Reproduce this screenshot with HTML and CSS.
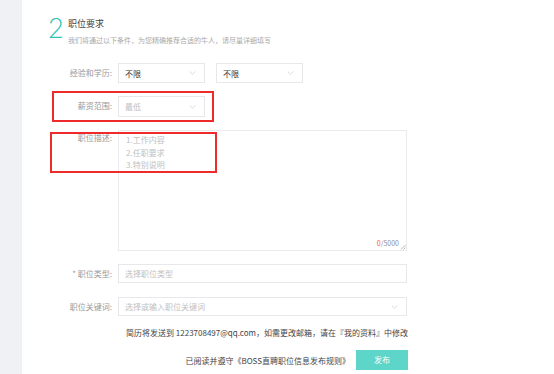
FILE: index.html
```html
<!DOCTYPE html>
<html lang="zh">
<head>
<meta charset="utf-8">
<link rel="stylesheet" href="styles.css">
</head>
<body>
<div class="sidebar"></div>
<div class="main">
  <div class="header">
    <div class="num">2</div>
    <div class="titles">
      <div class="title">职位要求</div>
      <div class="subtitle">我们将通过以下条件，为您精确推荐合适的牛人，请尽量详细填写</div>
    </div>
  </div>
  <div class="form">
    <div class="row">
      <div class="label">经验和学历:</div>
      <div class="select"><span>不限</span><svg class="chev" viewBox="0 0 8 5" width="7" height="4"><path d="M0.5 0.5 L4 4 L7.5 0.5" fill="none" stroke="#c4c4c4" stroke-width="0.8"/></svg></div>
      <div class="select second"><span>不限</span><svg class="chev" viewBox="0 0 8 5" width="7" height="4"><path d="M0.5 0.5 L4 4 L7.5 0.5" fill="none" stroke="#c4c4c4" stroke-width="0.8"/></svg></div>
    </div>
    <div class="row salary">
      <div class="label">薪资范围:</div>
      <div class="select"><span class="ph">最低</span><svg class="chev" viewBox="0 0 8 5" width="7" height="4"><path d="M0.5 0.5 L4 4 L7.5 0.5" fill="none" stroke="#c4c4c4" stroke-width="0.8"/></svg></div>
      <div class="mark mark1"></div>
    </div>
    <div class="row desc">
      <div class="label">职位描述:</div>
      <div class="textarea">
        <div class="ph lines">
          <div>1.工作内容</div>
          <div>2.任职要求</div>
          <div>3.特别说明</div>
        </div>
        <div class="counter"><span class="zero">0</span>/5000</div>
        <svg class="grip" viewBox="0 0 6 6" width="6" height="6"><path d="M1 5.5 L5.5 1 M3.5 5.5 L5.5 3.5" stroke="#999" stroke-width="0.7"/></svg>
      </div>
      <div class="mark mark2"></div>
    </div>
    <div class="row">
      <div class="label">* 职位类型:</div>
      <div class="input"><span class="ph">选择职位类型</span></div>
    </div>
    <div class="row">
      <div class="label">职位关键词:</div>
      <div class="input"><span class="ph">选择或输入职位关键词</span><svg class="chev" viewBox="0 0 8 5" width="7" height="4"><path d="M0.5 0.5 L4 4 L7.5 0.5" fill="none" stroke="#c4c4c4" stroke-width="0.8"/></svg></div>
    </div>
    <div class="note">简历将发送到 1223708497@qq.com，如需更改邮箱，请在『我的资料』中修改</div>
    <div class="submit">
      <span class="agree">已阅读并遵守《BOSS直聘职位信息发布规则》</span>
      <div class="btn">发布</div>
    </div>
  </div>
</div>
</body>
</html>
```
FILE: styles.css
```css
* { box-sizing: border-box; }
html, body { margin: 0; padding: 0; }
body {
  display: flex;
  width: 554px;
  height: 374px;
  overflow: hidden;
  background: #fff;
  font-family: "Noto Sans CJK SC", "Noto Sans", sans-serif;
  color: #333;
}
.sidebar {
  width: 22px;
  flex: none;
  background: #f0f1f5;
}
.main {
  flex: 1;
  padding-left: 26px;
}
.header {
  display: flex;
  align-items: flex-start;
  margin-top: 13px;
}
.num {
  font-family: "Lato", "Noto Sans", sans-serif;
  font-weight: 300;
  font-size: 27px;
  line-height: 27px;
  margin-top: 1px;
  color: #2ec4b0;
  width: 20px;
}
.titles { margin-top: 4px; }
.title {
  font-size: 9px;
  line-height: 14px;
  color: #444;
}
.subtitle {
  font-size: 7px;
  line-height: 10px;
  margin-top: 4px;
  color: #aaa;
}
.form {
  margin-top: 18px;
  width: 360px;
}
.row {
  position: relative;
  display: flex;
  align-items: flex-start;
  margin-bottom: 13px;
}
.label {
  width: 64px;
  margin-right: 6px;
  text-align: right;
  font-size: 8px;
  line-height: 20px;
  color: #999;
  white-space: nowrap;
}
.select, .input {
  display: flex;
  align-items: center;
  justify-content: space-between;
  height: 20px;
  border: 1px solid #e8e8ec;
  padding: 0 6px;
  font-size: 8px;
  color: #333;
}
.select { width: 87px; }
.select.second { margin-left: 11px; }
.salary .select { height: 21px; }
.input { width: 289px; height: 19px; }
.ph { color: #c0c0c0; }
.chev { flex: none; margin-right: 2px; }
.textarea {
  position: relative;
  width: 289px;
  height: 121px;
  border: 1px solid #ebebef;
  padding: 3px 7px;
  font-size: 8px;
}
.lines div { line-height: 12.5px; }
.counter {
  position: absolute;
  right: 7px;
  bottom: 2px;
  font-size: 7px;
  color: #8890a0;
}
.zero { color: #f5593c; }
.grip { position: absolute; right: 0; bottom: 0; }
.desc .label { line-height: 16px; }
.mark {
  position: absolute;
  border: 2px solid #ee2b2b;
}
.mark1 { left: 4px; top: -5px; width: 162px; height: 31px; }
.mark2 { left: 2px; top: 2px; width: 167px; height: 41px; }
.note {
  text-align: right;
  font-size: 8px;
  line-height: 12px;
  color: #444;
  margin-top: -3px;
}
.submit {
  display: flex;
  justify-content: flex-end;
  align-items: center;
  margin-top: 11px;
}
.agree {
  font-size: 8px;
  color: #444;
  margin-right: 6px;
}
.btn {
  width: 52px;
  height: 20px;
  background: #5dd5c8;
  color: #fff;
  font-size: 8px;
  line-height: 20px;
  text-align: center;
}
```
